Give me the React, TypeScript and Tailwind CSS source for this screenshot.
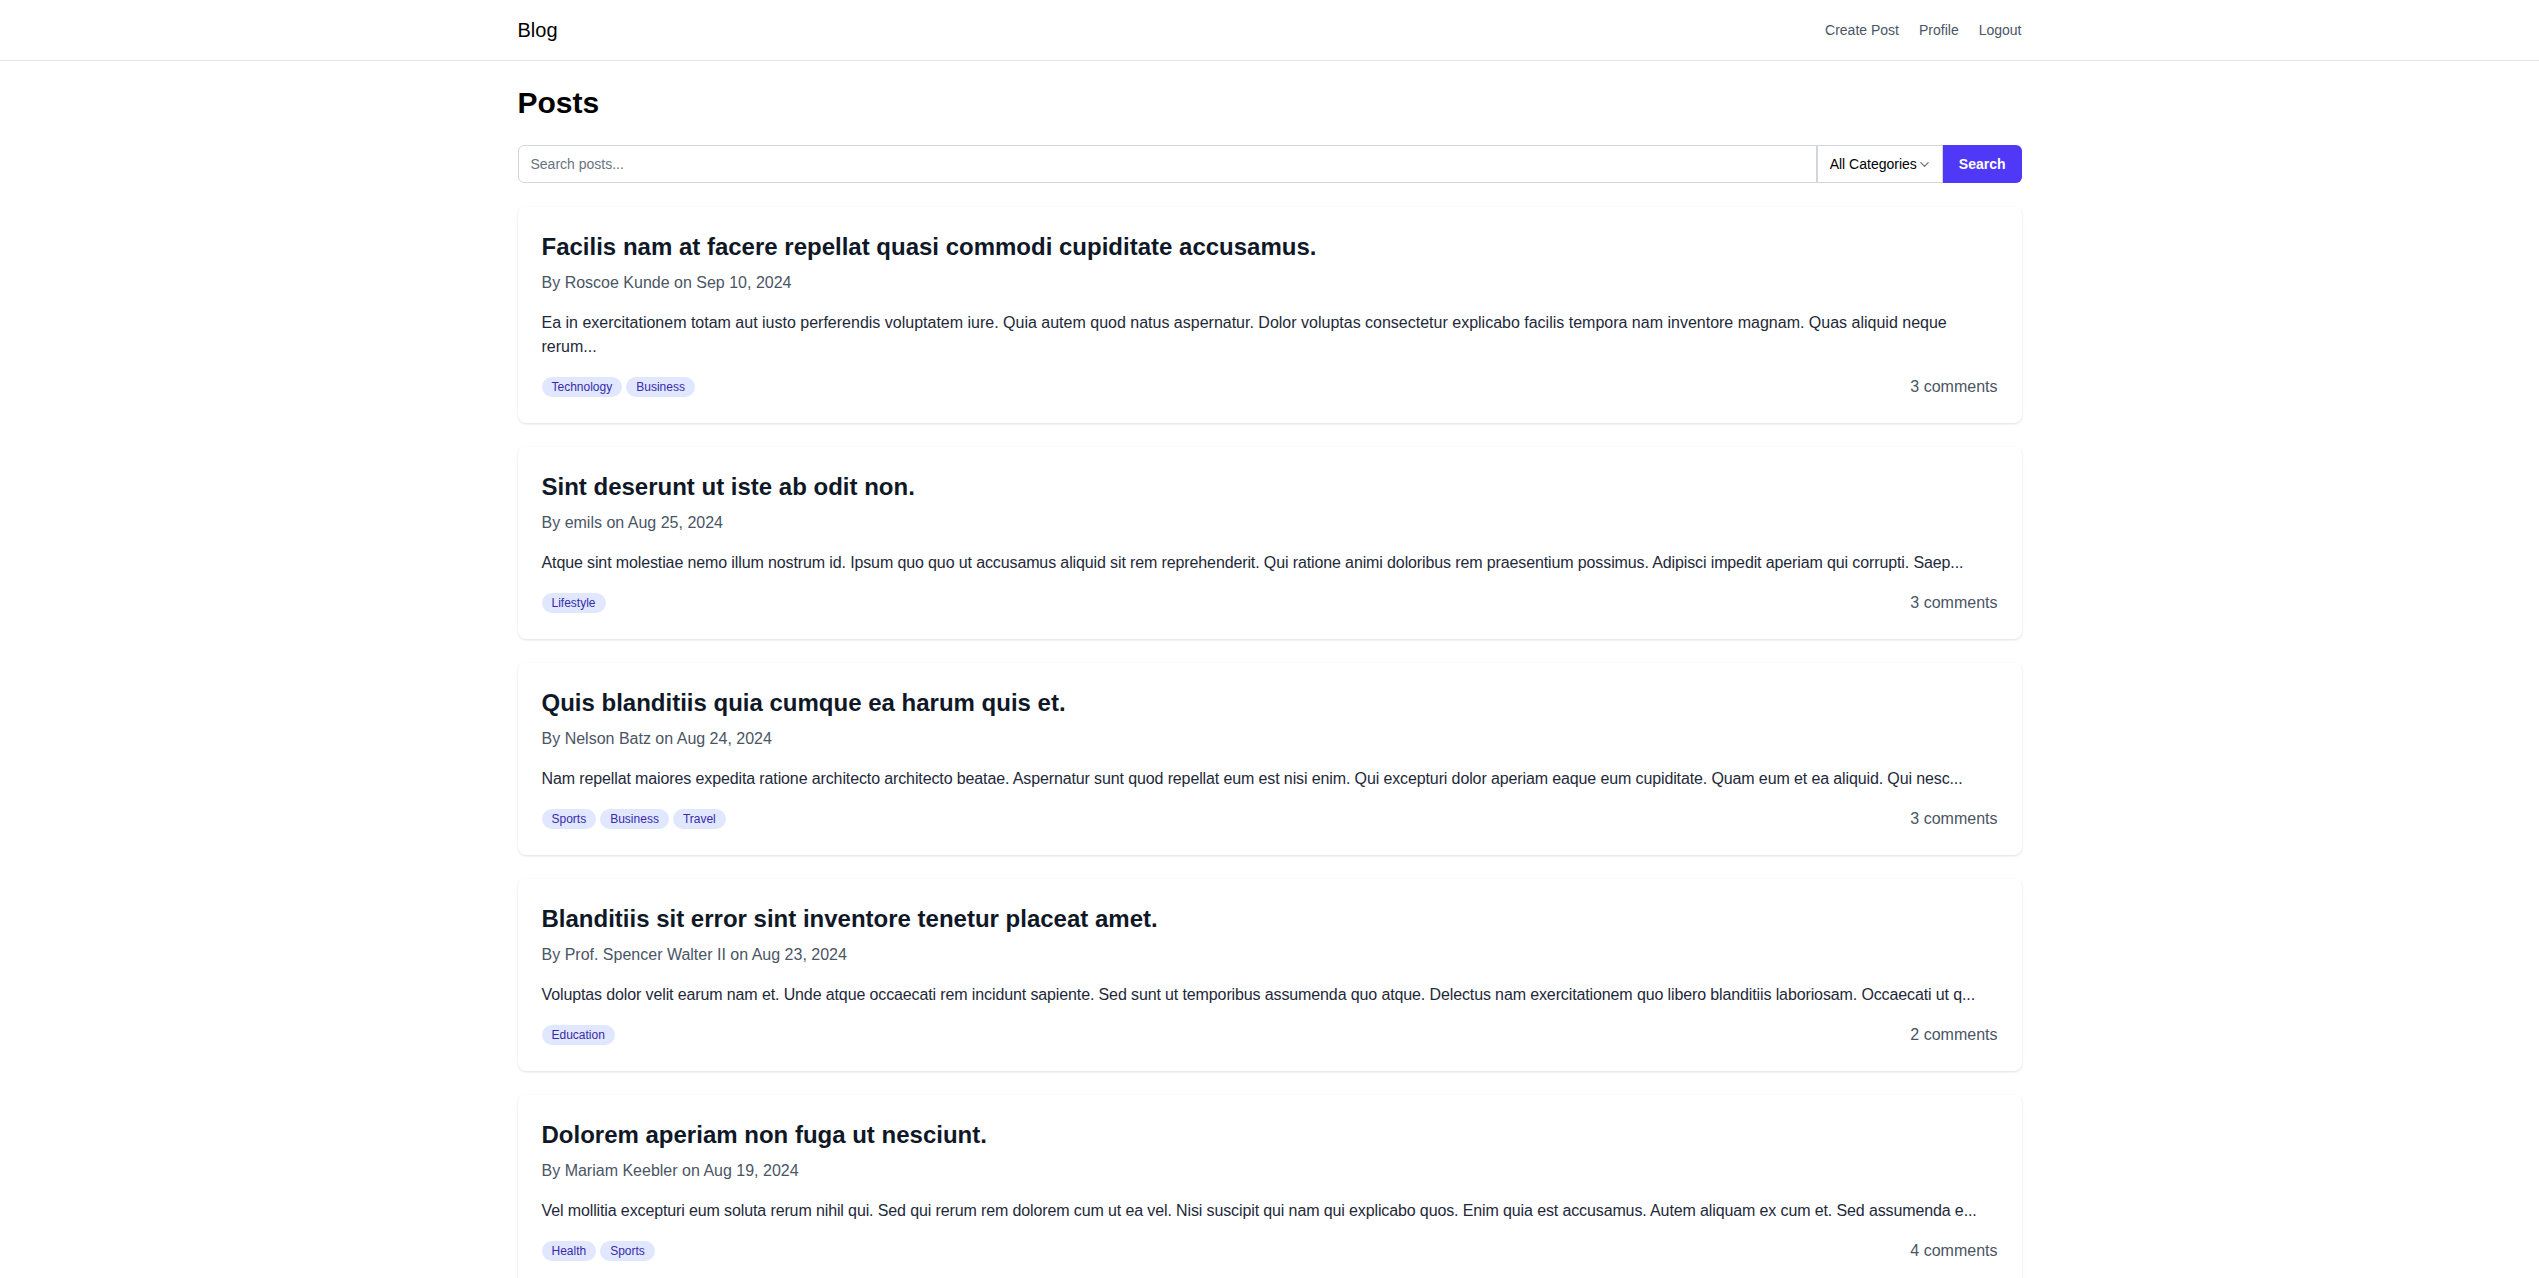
import React from 'react';

type Post = {
  id: number;
  title: string;
  author: string;
  date: string;
  excerpt: string;
  tags: string[];
  comments: number;
  oneLine?: boolean;
};

const posts: Post[] = [
  {
    id: 1,
    title: 'Facilis nam at facere repellat quasi commodi cupiditate accusamus.',
    author: 'Roscoe Kunde',
    date: 'Sep 10, 2024',
    excerpt:
      'Ea in exercitationem totam aut iusto perferendis voluptatem iure. Quia autem quod natus aspernatur. Dolor voluptas consectetur explicabo facilis tempora nam inventore magnam. Quas aliquid neque rerum...',
    tags: ['Technology', 'Business'],
    comments: 3,
  },
  {
    id: 2,
    title: 'Sint deserunt ut iste ab odit non.',
    author: 'emils',
    date: 'Aug 25, 2024',
    excerpt:
      'Atque sint molestiae nemo illum nostrum id. Ipsum quo quo ut accusamus aliquid sit rem reprehenderit. Qui ratione animi doloribus rem praesentium possimus. Adipisci impedit aperiam qui corrupti. Saep...',
    tags: ['Lifestyle'],
    comments: 3,
    oneLine: true,
  },
  {
    id: 3,
    title: 'Quis blanditiis quia cumque ea harum quis et.',
    author: 'Nelson Batz',
    date: 'Aug 24, 2024',
    excerpt:
      'Nam repellat maiores expedita ratione architecto architecto beatae. Aspernatur sunt quod repellat eum est nisi enim. Qui excepturi dolor aperiam eaque eum cupiditate. Quam eum et ea aliquid. Qui nesc...',
    tags: ['Sports', 'Business', 'Travel'],
    comments: 3,
    oneLine: true,
  },
  {
    id: 4,
    title: 'Blanditiis sit error sint inventore tenetur placeat amet.',
    author: 'Prof. Spencer Walter II',
    date: 'Aug 23, 2024',
    excerpt:
      'Voluptas dolor velit earum nam et. Unde atque occaecati rem incidunt sapiente. Sed sunt ut temporibus assumenda quo atque. Delectus nam exercitationem quo libero blanditiis laboriosam. Occaecati ut q...',
    tags: ['Education'],
    comments: 2,
    oneLine: true,
  },
  {
    id: 5,
    title: 'Dolorem aperiam non fuga ut nesciunt.',
    author: 'Mariam Keebler',
    date: 'Aug 19, 2024',
    excerpt:
      'Vel mollitia excepturi eum soluta rerum nihil qui. Sed qui rerum rem dolorem cum ut ea vel. Nisi suscipit qui nam qui explicabo quos. Enim quia est accusamus. Autem aliquam ex cum et. Sed assumenda e...',
    tags: ['Health', 'Sports'],
    comments: 4,
    oneLine: true,
  },
];

const ChevronDown: React.FC = () => (
  <svg width="11" height="11" viewBox="0 0 12 12" fill="none" className="text-gray-500">
    <path d="M2 4l4 4 4-4" stroke="currentColor" strokeWidth="1.4" strokeLinecap="round" strokeLinejoin="round" />
  </svg>
);

const PostCard: React.FC<{ post: Post }> = ({ post }) => (
  <div className="bg-white rounded-lg shadow p-6">
    <h2 className="text-2xl font-bold text-gray-900">{post.title}</h2>
    <p className="mt-2 text-gray-600">
      By {post.author} on {post.date}
    </p>
    {/* excerpts that sit on one line in the original get slightly tighter tracking */}
    <p className={post.oneLine ? 'mt-4 text-gray-800 tracking-[-0.12px]' : 'mt-4 text-gray-800'}>{post.excerpt}</p>
    <div className="mt-4 flex justify-between items-center">
      <div className="flex gap-1">
        {post.tags.map(tag => (
          <span key={tag} className="px-2.5 py-0.5 rounded-full bg-indigo-100 text-indigo-800 text-xs">
            {tag}
          </span>
        ))}
      </div>
      <span className="text-gray-600">{post.comments} comments</span>
    </div>
  </div>
);

export default function App() {
  return (
    <div className="min-h-screen bg-white font-['Liberation_Sans',Arial,sans-serif] text-gray-900">
      {/* Navbar */}
      <nav className="bg-white border-b border-gray-200">
        <div className="container mx-auto px-4 py-4 flex justify-between items-center">
          <a className="text-xl text-black">Blog</a>
          <div className="flex items-center gap-5 text-sm text-gray-600">
            <a>Create Post</a>
            <a>Profile</a>
            <a>Logout</a>
          </div>
        </div>
      </nav>

      <main className="container mx-auto px-4 py-6">
        <h1 className="text-3xl font-bold text-black mb-6">Posts</h1>

        {/* Search */}
        <form className="flex mb-6" onSubmit={e => e.preventDefault()}>
          <input
            type="text"
            placeholder="Search posts..."
            className="flex-1 border border-gray-300 rounded-l-md px-3 py-2 text-sm placeholder:text-gray-500 outline-none"
          />
          <button
            type="button"
            className="flex items-center gap-0.5 border border-gray-300 px-3 text-sm text-black bg-white"
          >
            All Categories <ChevronDown />
          </button>
          <button type="submit" className="bg-indigo-600 text-white text-sm font-bold px-4 rounded-r-md">
            Search
          </button>
        </form>

        <div className="space-y-6">
          {posts.map(p => (
            <PostCard key={p.id} post={p} />
          ))}
        </div>
      </main>
    </div>
  );
}
